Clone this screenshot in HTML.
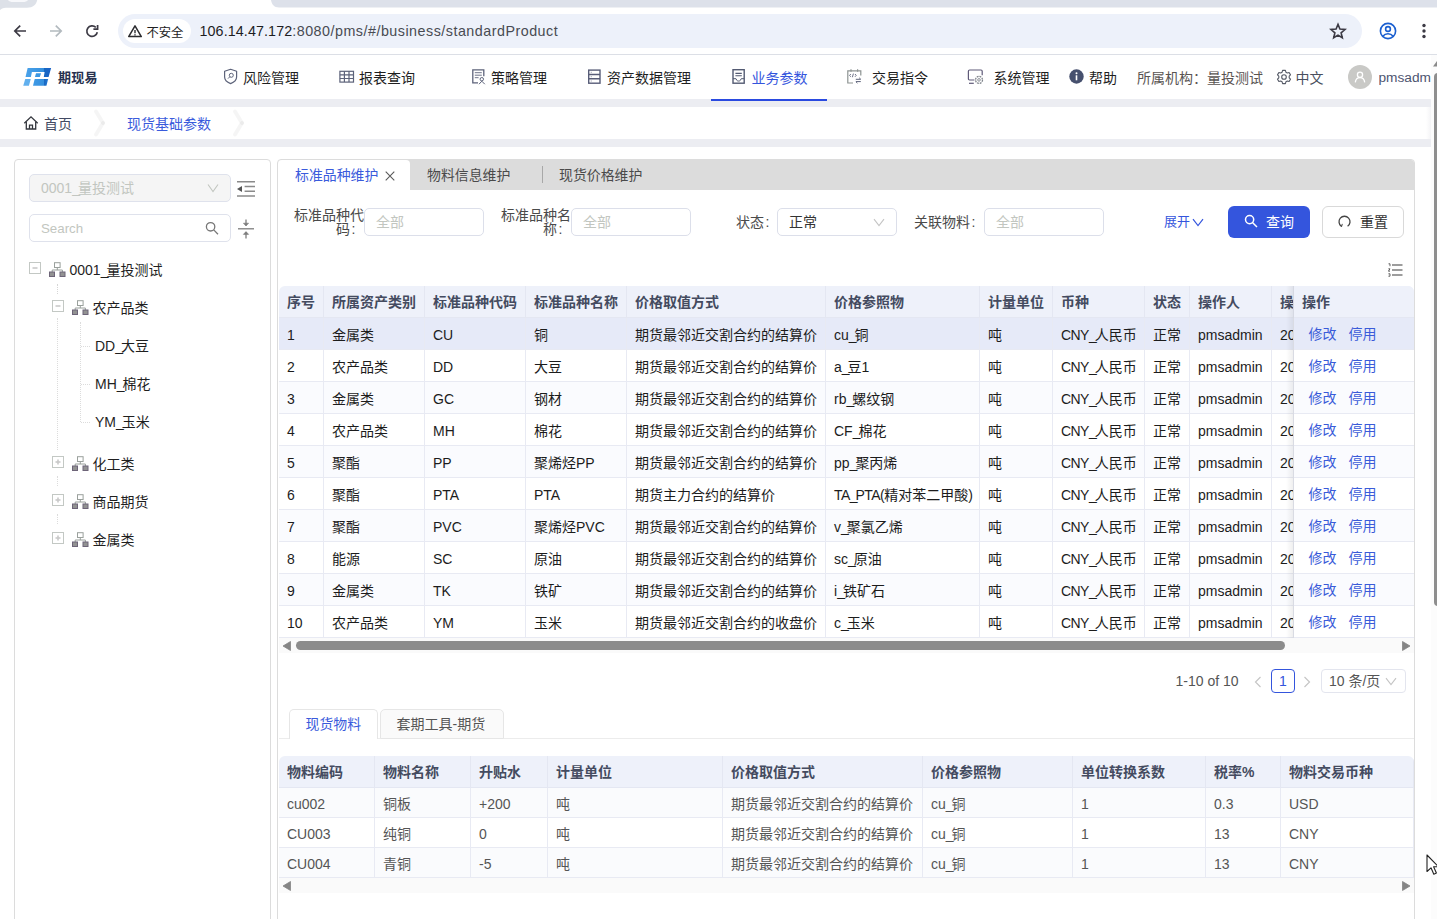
<!DOCTYPE html>
<html lang="zh-CN">
<head>
<meta charset="utf-8">
<title>期现易</title>
<style>
*{box-sizing:border-box;margin:0;padding:0}
html,body{width:1437px;height:919px;overflow:hidden;background:#fff}
body{font-family:"Liberation Sans","Noto Sans CJK SC",sans-serif;font-size:14px;color:#1f1f1f;position:relative}
.abs{position:absolute}
.t{position:absolute;white-space:nowrap;line-height:20px;height:20px}
svg{display:block}
/* browser chrome */
#tabstrip{left:0;top:0;width:1437px;height:6px;background:#dfe2ea}
#toolbar{left:0;top:6px;width:1437px;height:48px;background:#fff}
#tbline{left:0;top:54px;width:1437px;height:1px;background:#dcdfe6}
#urlbar{left:118px;top:14px;width:1244px;height:34px;border-radius:17px;background:#edf1fa}
#chip{left:123px;top:19px;width:68px;height:24px;border-radius:12px;background:#fff}
/* app header */
#hdr{left:0;top:55px;width:1431px;height:44px;background:#fff}
.mi{font-size:14px;color:#1f1f1f}
.band{background:#ecedf2}
#crumb{left:0;top:107px;width:1426px;height:32px;background:#fff}
/* panels */
.panel{border:1px solid #dcdcdc;border-radius:4px;background:#fff}
/* table */
.th{position:absolute;top:0;height:32px;line-height:33px;padding-left:8px;font-weight:bold;color:#444b60;border-right:1px solid #e4e7f2;white-space:nowrap;overflow:hidden}
.row{position:absolute;left:0;width:1135px;height:32px;border-bottom:1px solid #e8eaf3}
.td{position:absolute;top:0;height:31px;line-height:34px;padding-left:8px;border-right:1px solid #e8eaf3;white-space:nowrap;overflow:hidden;color:#1c1c1c}
.lk{color:#3a5bd9}
.inp{border:1px solid #dcdfea;border-radius:5px;background:#fff}
.ph{color:#c2c6c0}
.u{letter-spacing:-2px}
</style>
</head>
<body>
<!-- ===== browser chrome ===== -->
<div class="abs" id="toolbar"></div>
<div class="abs" id="tbline"></div>
<div class="abs" id="urlbar"></div>
<div class="abs" id="chip"></div>

<!-- tab strip shapes -->
<svg class="abs" style="left:0;top:0" width="1437" height="12" viewBox="0 0 1437 12">
  <rect x="0" y="0" width="1437" height="12" fill="#fff"/>
  <path d="M0 0H37.200C36.500 4.500 33 7.700 27 7.700H6C3 7.700 1 8.600 0 10.200Z" fill="#dde1e8"/>
  <path d="M8 0H28C27 1.6 25 2 23 2H13C11 2 9 1.6 8 0Z" fill="#f7f8fb"/>
  <path d="M271 0H1437V7.5H279C274 7.5 271.500 4 271 0Z" fill="#dde1ea"/>
</svg>
<!-- nav icons -->
<svg class="abs" style="left:12px;top:23px" width="16" height="16" viewBox="0 0 16 16" fill="none" stroke="#3c3a44" stroke-width="1.7" stroke-linecap="butt" stroke-linejoin="miter"><path d="M14 8H3M8.200 2.600L2.800 8L8.200 13.400"/></svg>
<svg class="abs" style="left:48px;top:23px" width="16" height="16" viewBox="0 0 16 16" fill="none" stroke="#b3babf" stroke-width="1.7"><path d="M2 8H13M7.800 2.600L13.200 8L7.800 13.400"/></svg>
<svg class="abs" style="left:84px;top:23px" width="16" height="16" viewBox="0 0 16 16" fill="none" stroke="#3c3a44" stroke-width="1.7"><path d="M13.300 9.300A5.300 5.300 0 1 1 11.800 4.300"/><path d="M13.600 2V6.200H9.400" stroke-linejoin="miter"/></svg>
<!-- warning -->
<svg class="abs" style="left:127px;top:24px" width="16" height="14" viewBox="0 0 16 14" fill="none" stroke="#2b2b2f" stroke-width="1.500" stroke-linejoin="round"><path d="M8 1.800L14.300 12.600H1.700Z"/><path d="M8 6V9.200M8 10.300V11.500" stroke-width="1.400"/></svg>
<div class="t" style="left:146.500px;top:22.500px;font-size:12.300px;color:#222">不安全</div>
<div class="t" id="url" style="left:199.500px;top:21px;font-size:14.300px;color:#484b52;letter-spacing:.5px"><span style="color:#1d1d1f;letter-spacing:.1px">106.14.47.172</span>:8080/pms/#/business/standardProduct</div>
<!-- star -->
<svg class="abs" style="left:1329px;top:22px" width="18" height="18" viewBox="0 0 18 18" fill="none" stroke="#3c3a44" stroke-width="1.600" stroke-linejoin="miter"><path d="M9 2.300L10.900 7.100L16 7.500L12.100 10.800L13.300 15.800L9 13.100L4.700 15.800L5.900 10.800L2 7.500L7.100 7.100Z"/></svg>
<!-- profile -->
<svg class="abs" style="left:1379px;top:22px" width="18" height="18" viewBox="0 0 18 18" fill="none" stroke="#1a5fd0" stroke-width="1.600"><circle cx="9" cy="9" r="7.600"/><circle cx="9" cy="7" r="2.400"/><path d="M3.800 14.300C5.500 12.300 7 11.800 9 11.800C11 11.800 12.500 12.300 14.200 14.300"/></svg>
<svg class="abs" style="left:1420px;top:22px" width="8" height="18" viewBox="0 0 8 18" fill="#3c3a44"><circle cx="4" cy="3.500" r="1.700"/><circle cx="4" cy="9" r="1.700"/><circle cx="4" cy="14.500" r="1.700"/></svg>

<!-- ===== app header ===== -->
<div class="abs" id="hdr"></div>

<!-- logo -->
<svg class="abs" style="left:20px;top:64px" width="36" height="26" viewBox="0 0 36 26">
  <defs><linearGradient id="lg1" x1="0" y1="0" x2="1" y2="0"><stop offset="0" stop-color="#4aa2ea"/><stop offset="0.700" stop-color="#3590de"/><stop offset="0.720" stop-color="#1868c2"/><stop offset="1" stop-color="#1a62c8"/></linearGradient>
  <linearGradient id="lg2" x1="0" y1="0" x2="1" y2="0"><stop offset="0" stop-color="#3f9ae6"/><stop offset="0.720" stop-color="#3590de"/><stop offset="0.740" stop-color="#1868c2"/><stop offset="1" stop-color="#2078d4"/></linearGradient></defs>
  <path d="M7.640 3.960H31.130L28.590 13.020H23.780L24.620 8.070H11.890L10.900 13.020H5.520Z" fill="url(#lg1)"/>
  <path d="M15.990 9.200H21.090L19.810 13.020H15Z" fill="#3b96e2"/>
  <path d="M5.240 15H10.760L8.920 21.790H3.250Z" fill="#62b0ee"/>
  <path d="M14.720 15H28.160L26.460 21.790H13.020Z" fill="url(#lg2)"/>
</svg>
<div class="t" style="left:58px;top:67.500px;font-size:13px;letter-spacing:.3px;font-weight:bold;color:#27314f">期现易</div>
<!-- menu icons -->
<svg class="abs" style="left:223px;top:68px" width="16" height="17" viewBox="0 0 16 17" fill="none" stroke="#5d637a" stroke-width="1.200" stroke-linejoin="round"><path d="M7.600 1.300L13.600 3.300V9C13.600 12 11 14.300 7.600 15.600C4.200 14.300 1.600 12 1.600 9V3.300Z"/><circle cx="8.300" cy="7.300" r="2" stroke-width="1"/><path d="M6.800 8.800L5 10.600" stroke-width="1"/></svg>
<div class="t mi" style="left:243px;top:67.600px">风险管理</div>
<svg class="abs" style="left:339px;top:70px" width="16" height="14" viewBox="0 0 16 14" fill="none" stroke="#5d637a" stroke-width="1.200"><rect x="0.900" y="1.300" width="13.600" height="10.800"/><path d="M0.900 4.900H14.500M0.900 8.500H14.500M5.400 1.300V12.100M10 1.300V12.100"/></svg>
<div class="t mi" style="left:359px;top:67.600px">报表查询</div>
<svg class="abs" style="left:471px;top:68px" width="16" height="18" viewBox="0 0 16 18" fill="none" stroke="#5d637a" stroke-width="1.300"><path d="M7 14.800H1.800V1.800H12.800V8.300"/><path d="M3.800 4.700H10.800M3.800 7.200H10.800M3.800 9.700H7.600" stroke-width="0.900"/><circle cx="10.800" cy="11.200" r="1.700" stroke-width="1"/><path d="M8 16.200L10.800 13.200L13.800 16.200" stroke-width="1"/></svg>
<div class="t mi" style="left:491px;top:67.600px">策略管理</div>
<svg class="abs" style="left:586px;top:68px" width="16" height="18" viewBox="0 0 16 18" fill="none" stroke="#585d78" stroke-width="1.400"><rect x="2.700" y="2.100" width="11.300" height="13.100"/><path d="M2.700 6.500H14M2.700 10.800H14"/><path d="M4.800 4.300H5.600M4.800 8.700H5.600M4.800 13H5.600" stroke-width="0.800"/></svg>
<div class="t mi" style="left:607px;top:67.600px">资产数据管理</div>
<svg class="abs" style="left:731px;top:68px" width="16" height="18" viewBox="0 0 16 18" fill="none" stroke="#535a72" stroke-width="1.400"><rect x="2" y="1.700" width="11.200" height="13.500"/><path d="M4.400 5.400H10.800M4.400 7.800H10.800" stroke-width="1.100"/><path d="M2 10.700H5L5.800 12.300C6.600 13.300 8.600 13.300 9.400 12.300L10.200 10.700H13.200" stroke-width="1"/></svg>
<div class="t mi" style="left:751.500px;top:67.600px;color:#3455dd">业务参数</div>
<svg class="abs" style="left:846px;top:68px" width="18" height="18" viewBox="0 0 18 18" fill="none" stroke="#8d9392" stroke-width="1.200"><path d="M7 15H1.800V2.800H14.800V7.500"/><path d="M5 1.200V3.800M11.600 1.200V3.800" /><path d="M4.800 6L3.600 7.400L4.800 8.800M9 6L10.200 7.400L9 8.800M7.400 5.600L6.400 9.200" stroke-width="0.900" stroke="#5d637a"/><path d="M9.800 11.300H14.600M13.200 9.800L14.800 11.300M14.800 13.600H10M11.400 15.100L9.800 13.600" stroke="#5d637a" stroke-width="1"/></svg>
<div class="t mi" style="left:872px;top:67.600px">交易指令</div>
<svg class="abs" style="left:967px;top:68px" width="18" height="18" viewBox="0 0 18 18" fill="none" stroke="#5f5a78" stroke-width="1.200"><path d="M7.400 12H2.600C1.800 12 1.400 11.600 1.400 10.800V3.200C1.400 2.400 1.800 2 2.600 2H14C14.800 2 15.200 2.400 15.200 3.200V7.200"/><path d="M2 15.300H6.800"/><circle cx="12" cy="11.900" r="3.500" stroke="#80858c" stroke-width="1.300" stroke-dasharray="1.900 0.850"/><circle cx="12" cy="11.900" r="1.300" stroke="#80858c" stroke-width="0.900"/></svg>
<div class="t mi" style="left:993.500px;top:67.600px">系统管理</div>
<svg class="abs" style="left:1069px;top:69px" width="15" height="15" viewBox="0 0 15 15"><circle cx="7.500" cy="7.500" r="7.200" fill="#46506e"/><rect x="6.700" y="6.300" width="1.600" height="5" fill="#fff"/><circle cx="7.500" cy="4.300" r="1" fill="#fff"/></svg>
<div class="t mi" style="left:1089px;top:67.600px">帮助</div>
<div class="t" style="left:1137px;top:67.600px;color:#595452">所属机构：量投测试</div>
<svg class="abs" style="left:1276px;top:69px" width="16" height="16" viewBox="0 0 16 16" fill="none" stroke="#555a66" stroke-width="1.100" stroke-linejoin="round"><path d="M6.600 1.400H9.400L9.900 3.200L11.300 4L13.100 3.500L14.500 5.900L13.200 7.200V8.800L14.500 10.100L13.100 12.500L11.300 12L9.900 12.800L9.400 14.600H6.600L6.100 12.800L4.700 12L2.900 12.500L1.500 10.100L2.800 8.800V7.200L1.500 5.900L2.900 3.500L4.700 4L6.100 3.200Z"/><circle cx="8" cy="8" r="2.300"/></svg>
<div class="t" style="left:1295.500px;top:67.600px;color:#4a4f5e">中文</div>
<svg class="abs" style="left:1348px;top:65px" width="24" height="24" viewBox="0 0 24 24"><circle cx="12" cy="12" r="12" fill="#c9c9c6"/><g fill="none" stroke="#fff" stroke-width="1.300"><circle cx="12" cy="9.700" r="2.600"/><path d="M7.300 17.300C7.700 14.200 9.600 12.700 12 12.700C14.400 12.700 16.300 14.200 16.700 17.300"/></g></svg>
<div class="t" style="left:1378.500px;top:67.500px;color:#4d5470;width:53px;overflow:hidden;font-size:13.700px">pmsadm</div>

<div class="abs band" style="left:0;top:99px;width:1431px;height:8px"></div>
<div class="abs" id="crumb"></div>
<div class="abs band" style="left:0;top:139px;width:1431px;height:8px"></div>

<svg class="abs" style="left:23px;top:115px" width="16" height="16" viewBox="0 0 16 16" fill="none" stroke="#33363d" stroke-width="1.300" stroke-linejoin="miter"><path d="M1.300 8.200L8 1.900L14.700 8.200"/><path d="M3.300 6.800V14H12.700V6.800"/><path d="M6.500 14V10.200H9.500V14"/></svg>
<div class="t" style="left:44px;top:114px;color:#424a63">首页</div>
<svg class="abs" style="left:92px;top:107px" width="18" height="32" viewBox="0 0 18 32" fill="none" stroke="rgba(0,0,0,.04)" stroke-width="4" stroke-linecap="round"><path d="M4 4.500L11 16"/><path d="M11 16L4 27.500"/></svg>
<div class="t" style="left:127px;top:114px;color:#3a5bdc">现货基础参数</div>
<svg class="abs" style="left:231px;top:107px" width="18" height="32" viewBox="0 0 18 32" fill="none" stroke="rgba(0,0,0,.04)" stroke-width="4" stroke-linecap="round"><path d="M4 4.500L11 16"/><path d="M11 16L4 27.500"/></svg>
<div class="abs" style="left:1426px;top:107px;width:5px;height:32px;background:linear-gradient(90deg,#fff,#f4f4f6)"></div>

<div class="abs" style="left:711px;top:99px;width:116px;height:2px;background:#2a4ae0"></div>
<!-- ===== left panel ===== -->
<div class="abs panel" id="lp" style="left:14px;top:159px;width:257px;height:780px"></div>

<div class="abs" style="left:29px;top:174px;width:202px;height:28px;border:1px solid #dfe2ec;border-radius:5px;background:#f5f5f5"></div>
<div class="t" style="left:41px;top:178px;color:#c2c6c0">0001<span class="u">_</span>量投测试</div>
<svg class="abs" style="left:207px;top:183px" width="12" height="10" viewBox="0 0 12 10" fill="none" stroke="#c2c6c0" stroke-width="1.100"><path d="M1 1.500L6 8.500L11 1.500"/></svg>
<svg class="abs" style="left:237px;top:180px" width="18" height="18" viewBox="0 0 18 18" fill="none" stroke="#8a8a8a" stroke-width="1.500"><path d="M0 1.700H18M7.600 6.500H18M7.600 11.300H18M0 16.100H18"/><path d="M0 9L5 6V12Z" fill="#555" stroke="none"/></svg>
<div class="abs" style="left:29px;top:214px;width:202px;height:28px;border:1px solid #dfe2ec;border-radius:5px;background:#fff"></div>
<div class="t" style="left:41px;top:218.500px;color:#c2c6c0;font-size:13.300px">Search</div>
<svg class="abs" style="left:205px;top:221px" width="14" height="14" viewBox="0 0 14 14" fill="none" stroke="#777" stroke-width="1.300"><circle cx="5.600" cy="5.800" r="4.200"/><path d="M8.700 8.900L13 13.200"/></svg>
<svg class="abs" style="left:238px;top:219px" width="16" height="20" viewBox="0 0 16 20" fill="none" stroke="#7d7d7d" stroke-width="1.300"><path d="M0 9.800H16"/><path d="M8 0.500V6.500M8 13.200V19.500"/><path d="M5.400 4.200L8 7L10.600 4.200Z" fill="#7d7d7d" stroke-width="0.600"/><path d="M5.400 15.400L8 12.600L10.600 15.400Z" fill="#7d7d7d" stroke-width="0.600"/></svg>
<div class="abs" style="left:57px;top:284px;width:0;height:10px;border-left:1px dotted #d6d6d6"></div>
<div class="abs" style="left:57px;top:318px;width:0;height:132px;border-left:1px dotted #dcdcdc"></div>
<div class="abs" style="left:57px;top:476px;width:0;height:10px;border-left:1px dotted #dcdcdc"></div>
<div class="abs" style="left:57px;top:514px;width:0;height:10px;border-left:1px dotted #dcdcdc"></div>
<div class="abs" style="left:80px;top:322px;width:0;height:100px;border-left:1px dotted #dcdcdc"></div>
<div class="abs" style="left:81px;top:346px;width:9px;height:0;border-top:1px dotted #dcdcdc"></div>
<div class="abs" style="left:81px;top:384px;width:9px;height:0;border-top:1px dotted #dcdcdc"></div>
<div class="abs" style="left:81px;top:422px;width:9px;height:0;border-top:1px dotted #dcdcdc"></div>
<svg class="abs" style="left:29px;top:262px" width="12" height="12" viewBox="0 0 12 12" fill="none"><rect x="0.500" y="0.500" width="11" height="11" fill="#fff" stroke="#c3c8c4"/><path d="M3.500 6H8.500" stroke="#c9c9c9" stroke-width="1.600"/></svg>
<svg class="abs" style="left:49px;top:262px" width="17" height="15" viewBox="0 0 17 15" fill="none"><rect x="5.500" y="0.700" width="5.600" height="4.800" fill="#fff" stroke="#9aa09c" stroke-width="1"/><path d="M8.300 5.500V8M3.200 10V8H13.400V10" stroke="#9aa09c" stroke-width="1"/><rect x="0" y="9.500" width="6" height="5.500" fill="#6d6478"/><rect x="1" y="10.500" width="4" height="3.500" fill="#929292"/><rect x="10.500" y="9.500" width="6" height="5.500" fill="#6d6478"/><rect x="11.500" y="10.500" width="4" height="3.500" fill="#929292"/></svg>
<div class="t" style="left:69.500px;top:260px">0001<span class="u">_</span>量投测试</div>
<svg class="abs" style="left:52px;top:300px" width="12" height="12" viewBox="0 0 12 12" fill="none"><rect x="0.500" y="0.500" width="11" height="11" fill="#fff" stroke="#c3c8c4"/><path d="M3.500 6H8.500" stroke="#c9c9c9" stroke-width="1.600"/></svg>
<svg class="abs" style="left:72px;top:300px" width="17" height="15" viewBox="0 0 17 15" fill="none"><rect x="5.500" y="0.700" width="5.600" height="4.800" fill="#fff" stroke="#9aa09c" stroke-width="1"/><path d="M8.300 5.500V8M3.200 10V8H13.400V10" stroke="#9aa09c" stroke-width="1"/><rect x="0" y="9.500" width="6" height="5.500" fill="#6d6478"/><rect x="1" y="10.500" width="4" height="3.500" fill="#929292"/><rect x="10.500" y="9.500" width="6" height="5.500" fill="#6d6478"/><rect x="11.500" y="10.500" width="4" height="3.500" fill="#929292"/></svg>
<div class="t" style="left:92.500px;top:298px">农产品类</div>
<div class="t" style="left:95px;top:336px">DD<span class="u">_</span>大豆</div>
<div class="t" style="left:95px;top:374px">MH<span class="u">_</span>棉花</div>
<div class="t" style="left:95px;top:412px">YM<span class="u">_</span>玉米</div>
<svg class="abs" style="left:52px;top:456px" width="12" height="12" viewBox="0 0 12 12" fill="none"><rect x="0.500" y="0.500" width="11" height="11" fill="#fff" stroke="#c3c8c4"/><path d="M3.500 6H8.500" stroke="#c9c9c9" stroke-width="1.600"/><path d="M6 3.500V8.500" stroke="#c9c9c9" stroke-width="1.600"/></svg>
<svg class="abs" style="left:72px;top:456px" width="17" height="15" viewBox="0 0 17 15" fill="none"><rect x="5.500" y="0.700" width="5.600" height="4.800" fill="#fff" stroke="#9aa09c" stroke-width="1"/><path d="M8.300 5.500V8M3.200 10V8H13.400V10" stroke="#9aa09c" stroke-width="1"/><rect x="0" y="9.500" width="6" height="5.500" fill="#6d6478"/><rect x="1" y="10.500" width="4" height="3.500" fill="#929292"/><rect x="10.500" y="9.500" width="6" height="5.500" fill="#6d6478"/><rect x="11.500" y="10.500" width="4" height="3.500" fill="#929292"/></svg>
<div class="t" style="left:92.500px;top:454px">化工类</div>
<svg class="abs" style="left:52px;top:494px" width="12" height="12" viewBox="0 0 12 12" fill="none"><rect x="0.500" y="0.500" width="11" height="11" fill="#fff" stroke="#c3c8c4"/><path d="M3.500 6H8.500" stroke="#c9c9c9" stroke-width="1.600"/><path d="M6 3.500V8.500" stroke="#c9c9c9" stroke-width="1.600"/></svg>
<svg class="abs" style="left:72px;top:494px" width="17" height="15" viewBox="0 0 17 15" fill="none"><rect x="5.500" y="0.700" width="5.600" height="4.800" fill="#fff" stroke="#9aa09c" stroke-width="1"/><path d="M8.300 5.500V8M3.200 10V8H13.400V10" stroke="#9aa09c" stroke-width="1"/><rect x="0" y="9.500" width="6" height="5.500" fill="#6d6478"/><rect x="1" y="10.500" width="4" height="3.500" fill="#929292"/><rect x="10.500" y="9.500" width="6" height="5.500" fill="#6d6478"/><rect x="11.500" y="10.500" width="4" height="3.500" fill="#929292"/></svg>
<div class="t" style="left:92.500px;top:492px">商品期货</div>
<svg class="abs" style="left:52px;top:532px" width="12" height="12" viewBox="0 0 12 12" fill="none"><rect x="0.500" y="0.500" width="11" height="11" fill="#fff" stroke="#c3c8c4"/><path d="M3.500 6H8.500" stroke="#c9c9c9" stroke-width="1.600"/><path d="M6 3.500V8.500" stroke="#c9c9c9" stroke-width="1.600"/></svg>
<svg class="abs" style="left:72px;top:532px" width="17" height="15" viewBox="0 0 17 15" fill="none"><rect x="5.500" y="0.700" width="5.600" height="4.800" fill="#fff" stroke="#9aa09c" stroke-width="1"/><path d="M8.300 5.500V8M3.200 10V8H13.400V10" stroke="#9aa09c" stroke-width="1"/><rect x="0" y="9.500" width="6" height="5.500" fill="#6d6478"/><rect x="1" y="10.500" width="4" height="3.500" fill="#929292"/><rect x="10.500" y="9.500" width="6" height="5.500" fill="#6d6478"/><rect x="11.500" y="10.500" width="4" height="3.500" fill="#929292"/></svg>
<div class="t" style="left:92.500px;top:530px">金属类</div>

<!-- ===== right panel ===== -->
<div class="abs panel" id="rp" style="left:277px;top:159px;width:1138px;height:780px"></div>

<!-- tab bar -->
<div class="abs" style="left:278px;top:160px;width:1136px;height:30px;background:#dcdcdc;border-radius:3px 3px 0 0"></div>
<div class="abs" style="left:278px;top:160px;width:132px;height:31px;background:#fff;border-radius:4px 4px 0 0"></div>
<div class="t" style="left:295px;top:165px;color:#3a5bdc;font-size:13.900px">标准品种维护</div>
<svg class="abs" style="left:385px;top:171px" width="10" height="10" viewBox="0 0 10 10" fill="none" stroke="#5a5a5a" stroke-width="1.100"><path d="M0.700 0.700L9.300 9.300M9.300 0.700L0.700 9.300"/></svg>
<div class="t" style="left:427px;top:165px;color:#4a4a4a;font-size:13.900px">物料信息维护</div>
<div class="abs" style="left:542px;top:166px;width:1px;height:17px;background:#a8a8a8"></div>
<div class="t" style="left:559px;top:165px;color:#4a4a4a;font-size:13.900px">现货价格维护</div>
<!-- filters -->
<div class="t" style="left:293px;top:208px;color:#4a4a4a;font-size:14px;line-height:14px;height:28px;width:71px;white-space:normal;text-align:right">标准品种代<br><span style="padding-right:8.500px">码<span style="margin-left:1.500px">:</span></span></div>
<div class="abs inp" style="left:364px;top:208px;width:120px;height:28px"></div>
<div class="t ph" style="left:376px;top:212px">全部</div>
<div class="t" style="left:500px;top:208px;color:#4a4a4a;font-size:14px;line-height:14px;height:28px;width:71px;white-space:normal;text-align:right">标准品种名<br><span style="padding-right:8.500px">称<span style="margin-left:1.500px">:</span></span></div>
<div class="abs inp" style="left:571px;top:208px;width:120px;height:28px"></div>
<div class="t ph" style="left:583px;top:212px">全部</div>
<div class="t" style="left:736px;top:212px;color:#4a4a4a">状态<span style="margin-left:1.500px">:</span></div>
<div class="abs inp" style="left:777px;top:208px;width:120px;height:28px"></div>
<div class="t" style="left:789px;top:212px;color:#333">正常</div>
<svg class="abs" style="left:873px;top:218px" width="12" height="9" viewBox="0 0 12 9" fill="none" stroke="#c4c4c4" stroke-width="1.100"><path d="M1 1.200L6 7.500L11 1.200"/></svg>
<div class="t" style="left:914px;top:212px;color:#4a4a4a">关联物料<span style="margin-left:1.500px">:</span></div>
<div class="abs inp" style="left:984px;top:208px;width:120px;height:28px"></div>
<div class="t ph" style="left:996px;top:212px">全部</div>
<div class="t" style="left:1164px;top:212px;color:#3455dd;font-size:13px">展开</div>
<svg class="abs" style="left:1192px;top:218px" width="12" height="9" viewBox="0 0 12 9" fill="none" stroke="#3455dd" stroke-width="1.200"><path d="M1 1.200L6 7.500L11 1.200"/></svg>
<div class="abs" style="left:1228px;top:206px;width:82px;height:32px;border-radius:6px;background:#3455dd"></div>
<svg class="abs" style="left:1244px;top:214px" width="14" height="14" viewBox="0 0 14 14" fill="none" stroke="#fff" stroke-width="1.500"><circle cx="5.600" cy="5.600" r="4.100"/><path d="M8.700 8.700L13 13"/></svg>
<div class="t" style="left:1266px;top:212px;color:#fff">查询</div>
<div class="abs" style="left:1322px;top:206px;width:82px;height:32px;border-radius:6px;background:#fff;border:1px solid #d9d9d9"></div>
<svg class="abs" style="left:1337px;top:214px" width="15" height="15" viewBox="0 0 15 15" fill="none" stroke="#444" stroke-width="1.300"><path d="M4.600 12.400A5.500 5.500 0 1 1 10.600 12.300"/><path d="M2.500 10.800L4.600 12.600L5.300 9.900" stroke-width="1"/></svg>
<div class="t" style="left:1360px;top:212px;color:#333">重置</div>
<!-- list icon -->
<svg class="abs" style="left:1388px;top:262.500px" width="15" height="14" viewBox="0 0 15 14" fill="none" stroke="#3d3d3d" stroke-width="1.200"><path d="M4 2H14.500M4 7H14.500M4 12H14.500"/><path d="M0.500 0.800H2V3.200M0.400 5.800H2L0.400 8.200H2M0.400 10.800H2V13.200H0.400" stroke-width="0.800"/></svg>
<div class="abs" id="mt" style="left:279px;top:286px;width:1135px;height:352px;overflow:hidden;border-radius:6px 6px 0 0">
<div class="abs" style="left:0;top:0;width:1135px;height:32px;background:#eef1fa;border-bottom:1px solid #e4e7f2"><div class="th" style="left:0px;width:45px">序号</div><div class="th" style="left:45px;width:101px">所属资产类别</div><div class="th" style="left:146px;width:101px">标准品种代码</div><div class="th" style="left:247px;width:101px">标准品种名称</div><div class="th" style="left:348px;width:199px">价格取值方式</div><div class="th" style="left:547px;width:154px">价格参照物</div><div class="th" style="left:701px;width:73px">计量单位</div><div class="th" style="left:774px;width:92px">币种</div><div class="th" style="left:866px;width:45px">状态</div><div class="th" style="left:911px;width:82px">操作人</div><div class="th" style="left:993px;width:22px">操</div></div>
<div class="row" style="top:32px;background:#e6eaf8"><div class="td" style="left:0px;width:45px">1</div><div class="td" style="left:45px;width:101px">金属类</div><div class="td" style="left:146px;width:101px">CU</div><div class="td" style="left:247px;width:101px">铜</div><div class="td" style="left:348px;width:199px">期货最邻近交割合约的结算价</div><div class="td" style="left:547px;width:154px">cu<span class="u">_</span>铜</div><div class="td" style="left:701px;width:73px">吨</div><div class="td" style="left:774px;width:92px"><span style="letter-spacing:-.55px">CNY<span class="u">_</span></span>人民币</div><div class="td" style="left:866px;width:45px">正常</div><div class="td" style="left:911px;width:82px">pmsadmin</div><div class="td" style="left:993px;width:22px">20</div></div>
<div class="row" style="top:64px;background:#fff"><div class="td" style="left:0px;width:45px">2</div><div class="td" style="left:45px;width:101px">农产品类</div><div class="td" style="left:146px;width:101px">DD</div><div class="td" style="left:247px;width:101px">大豆</div><div class="td" style="left:348px;width:199px">期货最邻近交割合约的结算价</div><div class="td" style="left:547px;width:154px">a<span class="u">_</span>豆1</div><div class="td" style="left:701px;width:73px">吨</div><div class="td" style="left:774px;width:92px"><span style="letter-spacing:-.55px">CNY<span class="u">_</span></span>人民币</div><div class="td" style="left:866px;width:45px">正常</div><div class="td" style="left:911px;width:82px">pmsadmin</div><div class="td" style="left:993px;width:22px">20</div></div>
<div class="row" style="top:96px;background:#fafbfe"><div class="td" style="left:0px;width:45px">3</div><div class="td" style="left:45px;width:101px">金属类</div><div class="td" style="left:146px;width:101px">GC</div><div class="td" style="left:247px;width:101px">钢材</div><div class="td" style="left:348px;width:199px">期货最邻近交割合约的结算价</div><div class="td" style="left:547px;width:154px">rb<span class="u">_</span>螺纹钢</div><div class="td" style="left:701px;width:73px">吨</div><div class="td" style="left:774px;width:92px"><span style="letter-spacing:-.55px">CNY<span class="u">_</span></span>人民币</div><div class="td" style="left:866px;width:45px">正常</div><div class="td" style="left:911px;width:82px">pmsadmin</div><div class="td" style="left:993px;width:22px">20</div></div>
<div class="row" style="top:128px;background:#fff"><div class="td" style="left:0px;width:45px">4</div><div class="td" style="left:45px;width:101px">农产品类</div><div class="td" style="left:146px;width:101px">MH</div><div class="td" style="left:247px;width:101px">棉花</div><div class="td" style="left:348px;width:199px">期货最邻近交割合约的结算价</div><div class="td" style="left:547px;width:154px">CF<span class="u">_</span>棉花</div><div class="td" style="left:701px;width:73px">吨</div><div class="td" style="left:774px;width:92px"><span style="letter-spacing:-.55px">CNY<span class="u">_</span></span>人民币</div><div class="td" style="left:866px;width:45px">正常</div><div class="td" style="left:911px;width:82px">pmsadmin</div><div class="td" style="left:993px;width:22px">20</div></div>
<div class="row" style="top:160px;background:#fafbfe"><div class="td" style="left:0px;width:45px">5</div><div class="td" style="left:45px;width:101px">聚酯</div><div class="td" style="left:146px;width:101px">PP</div><div class="td" style="left:247px;width:101px">聚烯烃PP</div><div class="td" style="left:348px;width:199px">期货最邻近交割合约的结算价</div><div class="td" style="left:547px;width:154px">pp<span class="u">_</span>聚丙烯</div><div class="td" style="left:701px;width:73px">吨</div><div class="td" style="left:774px;width:92px"><span style="letter-spacing:-.55px">CNY<span class="u">_</span></span>人民币</div><div class="td" style="left:866px;width:45px">正常</div><div class="td" style="left:911px;width:82px">pmsadmin</div><div class="td" style="left:993px;width:22px">20</div></div>
<div class="row" style="top:192px;background:#fff"><div class="td" style="left:0px;width:45px">6</div><div class="td" style="left:45px;width:101px">聚酯</div><div class="td" style="left:146px;width:101px">PTA</div><div class="td" style="left:247px;width:101px">PTA</div><div class="td" style="left:348px;width:199px">期货主力合约的结算价</div><div class="td" style="left:547px;width:154px"><span style="letter-spacing:-.55px">TA<span class="u">_</span>PTA(</span>精对苯二甲酸<span style="letter-spacing:-.5px">)</span></div><div class="td" style="left:701px;width:73px">吨</div><div class="td" style="left:774px;width:92px"><span style="letter-spacing:-.55px">CNY<span class="u">_</span></span>人民币</div><div class="td" style="left:866px;width:45px">正常</div><div class="td" style="left:911px;width:82px">pmsadmin</div><div class="td" style="left:993px;width:22px">20</div></div>
<div class="row" style="top:224px;background:#fafbfe"><div class="td" style="left:0px;width:45px">7</div><div class="td" style="left:45px;width:101px">聚酯</div><div class="td" style="left:146px;width:101px">PVC</div><div class="td" style="left:247px;width:101px">聚烯烃PVC</div><div class="td" style="left:348px;width:199px">期货最邻近交割合约的结算价</div><div class="td" style="left:547px;width:154px">v<span class="u">_</span>聚氯乙烯</div><div class="td" style="left:701px;width:73px">吨</div><div class="td" style="left:774px;width:92px"><span style="letter-spacing:-.55px">CNY<span class="u">_</span></span>人民币</div><div class="td" style="left:866px;width:45px">正常</div><div class="td" style="left:911px;width:82px">pmsadmin</div><div class="td" style="left:993px;width:22px">20</div></div>
<div class="row" style="top:256px;background:#fff"><div class="td" style="left:0px;width:45px">8</div><div class="td" style="left:45px;width:101px">能源</div><div class="td" style="left:146px;width:101px">SC</div><div class="td" style="left:247px;width:101px">原油</div><div class="td" style="left:348px;width:199px">期货最邻近交割合约的结算价</div><div class="td" style="left:547px;width:154px">sc<span class="u">_</span>原油</div><div class="td" style="left:701px;width:73px">吨</div><div class="td" style="left:774px;width:92px"><span style="letter-spacing:-.55px">CNY<span class="u">_</span></span>人民币</div><div class="td" style="left:866px;width:45px">正常</div><div class="td" style="left:911px;width:82px">pmsadmin</div><div class="td" style="left:993px;width:22px">20</div></div>
<div class="row" style="top:288px;background:#fafbfe"><div class="td" style="left:0px;width:45px">9</div><div class="td" style="left:45px;width:101px">金属类</div><div class="td" style="left:146px;width:101px">TK</div><div class="td" style="left:247px;width:101px">铁矿</div><div class="td" style="left:348px;width:199px">期货最邻近交割合约的结算价</div><div class="td" style="left:547px;width:154px">i<span class="u">_</span>铁矿石</div><div class="td" style="left:701px;width:73px">吨</div><div class="td" style="left:774px;width:92px"><span style="letter-spacing:-.55px">CNY<span class="u">_</span></span>人民币</div><div class="td" style="left:866px;width:45px">正常</div><div class="td" style="left:911px;width:82px">pmsadmin</div><div class="td" style="left:993px;width:22px">20</div></div>
<div class="row" style="top:320px;background:#fff"><div class="td" style="left:0px;width:45px">10</div><div class="td" style="left:45px;width:101px">农产品类</div><div class="td" style="left:146px;width:101px">YM</div><div class="td" style="left:247px;width:101px">玉米</div><div class="td" style="left:348px;width:199px">期货最邻近交割合约的收盘价</div><div class="td" style="left:547px;width:154px">c<span class="u">_</span>玉米</div><div class="td" style="left:701px;width:73px">吨</div><div class="td" style="left:774px;width:92px"><span style="letter-spacing:-.55px">CNY<span class="u">_</span></span>人民币</div><div class="td" style="left:866px;width:45px">正常</div><div class="td" style="left:911px;width:82px">pmsadmin</div><div class="td" style="left:993px;width:22px">20</div></div>
<div class="abs" style="left:1007px;top:0;width:8px;height:352px;background:linear-gradient(90deg,rgba(0,0,0,0),rgba(0,0,0,.07))"></div>
<div class="abs" style="left:1015px;top:0;width:120px;height:32px;background:#eef1fa;border-bottom:1px solid #e4e7f2"><div class="th" style="left:0;width:120px;border-right:0">操作</div></div>
<div class="abs" style="left:1015px;top:32px;width:120px;height:32px;background:#e6eaf8;border-bottom:1px solid #e8eaf3"><div class="t lk" style="left:14.500px;top:5.500px">修改</div><div class="t lk" style="left:54.500px;top:5.500px">停用</div></div>
<div class="abs" style="left:1015px;top:64px;width:120px;height:32px;background:#fff;border-bottom:1px solid #e8eaf3"><div class="t lk" style="left:14.500px;top:5.500px">修改</div><div class="t lk" style="left:54.500px;top:5.500px">停用</div></div>
<div class="abs" style="left:1015px;top:96px;width:120px;height:32px;background:#fafbfe;border-bottom:1px solid #e8eaf3"><div class="t lk" style="left:14.500px;top:5.500px">修改</div><div class="t lk" style="left:54.500px;top:5.500px">停用</div></div>
<div class="abs" style="left:1015px;top:128px;width:120px;height:32px;background:#fff;border-bottom:1px solid #e8eaf3"><div class="t lk" style="left:14.500px;top:5.500px">修改</div><div class="t lk" style="left:54.500px;top:5.500px">停用</div></div>
<div class="abs" style="left:1015px;top:160px;width:120px;height:32px;background:#fafbfe;border-bottom:1px solid #e8eaf3"><div class="t lk" style="left:14.500px;top:5.500px">修改</div><div class="t lk" style="left:54.500px;top:5.500px">停用</div></div>
<div class="abs" style="left:1015px;top:192px;width:120px;height:32px;background:#fff;border-bottom:1px solid #e8eaf3"><div class="t lk" style="left:14.500px;top:5.500px">修改</div><div class="t lk" style="left:54.500px;top:5.500px">停用</div></div>
<div class="abs" style="left:1015px;top:224px;width:120px;height:32px;background:#fafbfe;border-bottom:1px solid #e8eaf3"><div class="t lk" style="left:14.500px;top:5.500px">修改</div><div class="t lk" style="left:54.500px;top:5.500px">停用</div></div>
<div class="abs" style="left:1015px;top:256px;width:120px;height:32px;background:#fff;border-bottom:1px solid #e8eaf3"><div class="t lk" style="left:14.500px;top:5.500px">修改</div><div class="t lk" style="left:54.500px;top:5.500px">停用</div></div>
<div class="abs" style="left:1015px;top:288px;width:120px;height:32px;background:#fafbfe;border-bottom:1px solid #e8eaf3"><div class="t lk" style="left:14.500px;top:5.500px">修改</div><div class="t lk" style="left:54.500px;top:5.500px">停用</div></div>
<div class="abs" style="left:1015px;top:320px;width:120px;height:32px;background:#fff;border-bottom:1px solid #e8eaf3"><div class="t lk" style="left:14.500px;top:5.500px">修改</div><div class="t lk" style="left:54.500px;top:5.500px">停用</div></div>
</div>
<div class="abs" style="left:279px;top:638px;width:1135px;height:15px;background:#fafafa"></div>
<svg class="abs" style="left:282px;top:640.500px" width="9" height="10" viewBox="0 0 9 10"><path d="M1 5L8.500 0.500V9.500Z" fill="#858585" stroke="#858585" stroke-width="0.800" stroke-linejoin="round"/></svg>
<svg class="abs" style="left:1402px;top:640.500px" width="9" height="10" viewBox="0 0 9 10"><path d="M8 5L0.500 0.500V9.500Z" fill="#858585" stroke="#858585" stroke-width="0.800" stroke-linejoin="round"/></svg>
<div class="abs" style="left:296px;top:641px;width:989px;height:9px;border-radius:4.500px;background:#8c8c8c"></div>


<div class="t" style="left:1175.500px;top:671px;color:#555">1-10 of 10</div>
<svg class="abs" style="left:1254px;top:676px" width="8" height="12" viewBox="0 0 8 12" fill="none" stroke="#c6c6c6" stroke-width="1.200"><path d="M6.500 1L1.500 6L6.500 11"/></svg>
<div class="abs" style="left:1271px;top:669px;width:24px;height:24px;border:1px solid #3455dd;border-radius:4px;background:#fff"></div>
<div class="t" style="left:1271px;top:671px;width:24px;text-align:center;color:#3455dd">1</div>
<svg class="abs" style="left:1303px;top:676px" width="8" height="12" viewBox="0 0 8 12" fill="none" stroke="#c6c6c6" stroke-width="1.200"><path d="M1.500 1L6.500 6L1.500 11"/></svg>
<div class="abs" style="left:1321px;top:669px;width:85px;height:24px;border:1px solid #e3e5ee;border-radius:4px;background:#fff"></div>
<div class="t" style="left:1329px;top:671px;color:#555">10 条/页</div>
<svg class="abs" style="left:1385px;top:677px" width="12" height="9" viewBox="0 0 12 9" fill="none" stroke="#c4c4c4" stroke-width="1.100"><path d="M1 1.200L6 7.500L11 1.200"/></svg>


<div class="abs" style="left:279px;top:738px;width:1135px;height:1px;background:#ececec"></div>
<div class="abs" style="left:289px;top:709px;width:89px;height:30px;border:1px solid #e6e6e6;border-bottom:0;border-radius:5px 5px 0 0;background:#fff"></div>
<div class="t" style="left:305.500px;top:714px;color:#3a5bdc;font-size:13.900px">现货物料</div>
<div class="abs" style="left:380px;top:709px;width:124px;height:30px;border:1px solid #e6e6e6;border-radius:5px 5px 0 0;background:#fafafa"></div>
<div class="t" style="left:396.500px;top:714px;color:#555">套期工具-期货</div>
<div class="abs" id="lt" style="left:279px;top:756px;width:1135px;height:122px;overflow:hidden;border-radius:6px 6px 0 0">
<div class="abs" style="left:0;top:0;width:1135px;height:32px;background:#eef1fa;border-bottom:1px solid #e4e7f2"><div class="th" style="left:0px;width:96px">物料编码</div><div class="th" style="left:96px;width:96px">物料名称</div><div class="th" style="left:192px;width:77px">升贴水</div><div class="th" style="left:269px;width:175px">计量单位</div><div class="th" style="left:444px;width:200px">价格取值方式</div><div class="th" style="left:644px;width:150px">价格参照物</div><div class="th" style="left:794px;width:133px">单位转换系数</div><div class="th" style="left:927px;width:75px">税率%</div><div class="th" style="left:1002px;width:133px">物料交易币种</div></div>
<div class="row" style="top:32px;height:30px;background:#fafbfd"><div class="td" style="left:0px;width:96px;height:29px;line-height:32px;color:#555">cu002</div><div class="td" style="left:96px;width:96px;height:29px;line-height:32px;color:#555">铜板</div><div class="td" style="left:192px;width:77px;height:29px;line-height:32px;color:#555">+200</div><div class="td" style="left:269px;width:175px;height:29px;line-height:32px;color:#555">吨</div><div class="td" style="left:444px;width:200px;height:29px;line-height:32px;color:#555">期货最邻近交割合约的结算价</div><div class="td" style="left:644px;width:150px;height:29px;line-height:32px;color:#555">cu<span class="u">_</span>铜</div><div class="td" style="left:794px;width:133px;height:29px;line-height:32px;color:#555">1</div><div class="td" style="left:927px;width:75px;height:29px;line-height:32px;color:#555">0.3</div><div class="td" style="left:1002px;width:133px;height:29px;line-height:32px;color:#555">USD</div></div>
<div class="row" style="top:62px;height:30px;background:#fff"><div class="td" style="left:0px;width:96px;height:29px;line-height:32px;color:#555">CU003</div><div class="td" style="left:96px;width:96px;height:29px;line-height:32px;color:#555">纯铜</div><div class="td" style="left:192px;width:77px;height:29px;line-height:32px;color:#555">0</div><div class="td" style="left:269px;width:175px;height:29px;line-height:32px;color:#555">吨</div><div class="td" style="left:444px;width:200px;height:29px;line-height:32px;color:#555">期货最邻近交割合约的结算价</div><div class="td" style="left:644px;width:150px;height:29px;line-height:32px;color:#555">cu<span class="u">_</span>铜</div><div class="td" style="left:794px;width:133px;height:29px;line-height:32px;color:#555">1</div><div class="td" style="left:927px;width:75px;height:29px;line-height:32px;color:#555">13</div><div class="td" style="left:1002px;width:133px;height:29px;line-height:32px;color:#555">CNY</div></div>
<div class="row" style="top:92px;height:30px;background:#fafbfd"><div class="td" style="left:0px;width:96px;height:29px;line-height:32px;color:#555">CU004</div><div class="td" style="left:96px;width:96px;height:29px;line-height:32px;color:#555">青铜</div><div class="td" style="left:192px;width:77px;height:29px;line-height:32px;color:#555">-5</div><div class="td" style="left:269px;width:175px;height:29px;line-height:32px;color:#555">吨</div><div class="td" style="left:444px;width:200px;height:29px;line-height:32px;color:#555">期货最邻近交割合约的结算价</div><div class="td" style="left:644px;width:150px;height:29px;line-height:32px;color:#555">cu<span class="u">_</span>铜</div><div class="td" style="left:794px;width:133px;height:29px;line-height:32px;color:#555">1</div><div class="td" style="left:927px;width:75px;height:29px;line-height:32px;color:#555">13</div><div class="td" style="left:1002px;width:133px;height:29px;line-height:32px;color:#555">CNY</div></div>
</div>
<div class="abs" style="left:279px;top:878px;width:1135px;height:15px;background:#fafafa"></div>
<svg class="abs" style="left:282px;top:881px" width="9" height="10" viewBox="0 0 9 10"><path d="M1 5L8.500 0.500V9.500Z" fill="#858585" stroke="#858585" stroke-width="0.800" stroke-linejoin="round"/></svg>
<svg class="abs" style="left:1402px;top:881px" width="9" height="10" viewBox="0 0 9 10"><path d="M8 5L0.500 0.500V9.500Z" fill="#858585" stroke="#858585" stroke-width="0.800" stroke-linejoin="round"/></svg>


<!-- ===== page scrollbar ===== -->
<div class="abs" style="left:1431px;top:55px;width:6px;height:864px;background:#fcfcfc"></div>
<div class="abs" style="left:1434px;top:73px;width:8px;height:533px;border-radius:4px;background:#8e8e8e"></div>
<svg class="abs" style="left:1433px;top:60px" width="4" height="8" viewBox="0 0 4 8"><path d="M0 6.500L4 1V6.500Z" fill="#8a8a8a"/></svg>
<svg class="abs" style="left:1426px;top:854px" width="12" height="22" viewBox="0 0 12 22"><path d="M1 1V17.500L5 13.800L7.800 20.200L10.400 19L7.600 12.800H12.500Z" fill="#fff" stroke="#222" stroke-width="1.100" stroke-linejoin="round"/></svg>
</body>
</html>
